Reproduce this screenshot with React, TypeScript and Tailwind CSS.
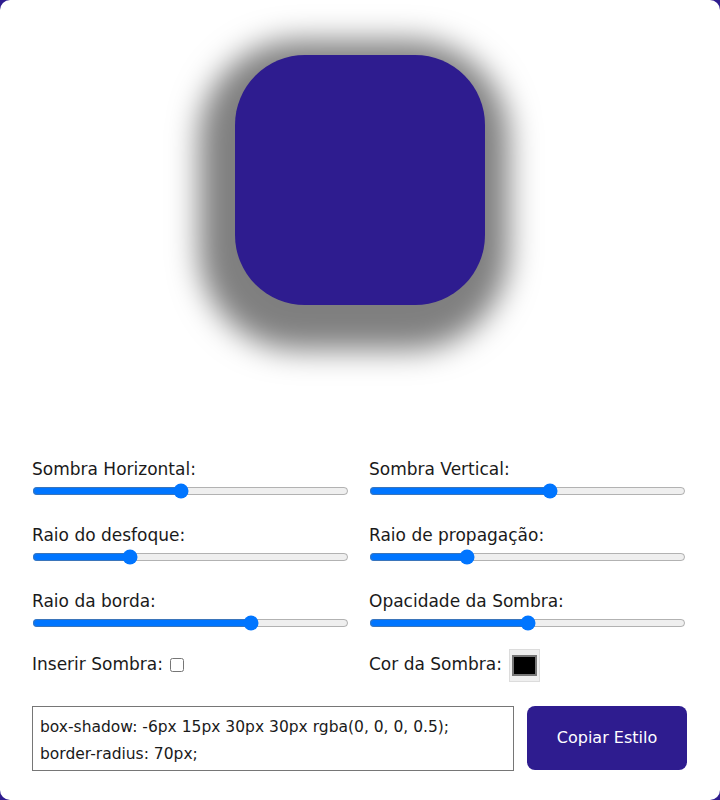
import { useState } from "react";

const font = { fontFamily: '"DejaVu Sans", "Liberation Sans", sans-serif' };

type Ctl = { label: string; min: number; max: number; step: number; value: number; key: string };

const App = () => {
  const [vals, setVals] = useState<Record<string, number>>({
    h: -6,
    v: 15,
    blur: 30,
    spread: 30,
    radius: 70,
    opacity: 0.5,
  });
  const [inset, setInset] = useState(false);
  const [color, setColor] = useState("#000000");

  const controls: Ctl[] = [
    { label: "Sombra Horizontal:", min: -100, max: 100, step: 1, value: vals.h, key: "h" },
    { label: "Sombra Vertical:", min: -100, max: 100, step: 1, value: vals.v, key: "v" },
    { label: "Raio do desfoque:", min: 0, max: 100, step: 1, value: vals.blur, key: "blur" },
    { label: "Raio de propagação:", min: 0, max: 100, step: 1, value: vals.spread, key: "spread" },
    { label: "Raio da borda:", min: 0, max: 100, step: 1, value: vals.radius, key: "radius" },
    { label: "Opacidade da Sombra:", min: 0, max: 1, step: 0.01, value: vals.opacity, key: "opacity" },
  ];

  const r = parseInt(color.slice(1, 3), 16);
  const g = parseInt(color.slice(3, 5), 16);
  const b = parseInt(color.slice(5, 7), 16);
  const rgba = `rgba(${r}, ${g}, ${b}, ${vals.opacity})`;
  const shadow = `${inset ? "inset " : ""}${vals.h}px ${vals.v}px ${vals.blur}px ${vals.spread}px ${rgba}`;

  return (
    <div className="min-h-screen bg-[#2e1c8f] flex items-center justify-center" style={font}>
      <div className="w-[720px] h-[800px] bg-white rounded-[10px] flex flex-col text-[#1a1a1a] text-[17px]">
        <div className="h-[457px] flex justify-center pt-[55px]">
          <div
            className="w-[250px] h-[250px] bg-[#2e1c8f]"
            style={{ boxShadow: shadow, borderRadius: vals.radius }}
          />
        </div>

        <div className="grid grid-cols-[317px_317px] gap-x-5 gap-y-6 pl-8">
          {controls.map((c) => (
            <div key={c.key} className="flex flex-col">
              <label className="leading-6">{c.label}</label>
              <input
                type="range"
                min={c.min}
                max={c.max}
                step={c.step}
                value={c.value}
                onChange={(e) => setVals({ ...vals, [c.key]: Number(e.target.value) })}
                className="w-full mt-[2px]"
              />
            </div>
          ))}
          <div className="flex items-center h-6 mt-[-3px]">
            <label className="leading-6">Inserir Sombra:</label>
            <input
              type="checkbox"
              checked={inset}
              onChange={(e) => setInset(e.target.checked)}
              className="ml-[7px] mt-[1px] w-[14px] h-[14px]"
            />
          </div>
          <div className="flex items-center h-6 mt-[-3px]">
            <label className="leading-6">Cor da Sombra:</label>
            <input
              type="color"
              value={color}
              onChange={(e) => setColor(e.target.value)}
              className="ml-[7px] mt-[3px] w-[31px] h-[33px] shrink-0 bg-[#efefef] border border-[#dcdcdc] px-[2px] py-[5px] [&::-webkit-color-swatch-wrapper]:p-0 [&::-webkit-color-swatch]:border-2 [&::-webkit-color-swatch]:border-[#777] [&::-webkit-color-swatch]:rounded-none"
            />
          </div>
        </div>

        <div className="flex gap-[13px] pl-8 mt-[30px]">
          <div className="w-[482px] h-[65px] border border-[#767676] px-[7px] pt-[7px] leading-[27px] text-[15.5px]">
            <div>box-shadow: {shadow};</div>
            <div>border-radius: {vals.radius}px;</div>
          </div>
          <button className="w-[160px] h-[64px] bg-[#2e1c8f] text-white rounded-lg text-base">Copiar Estilo</button>
        </div>
      </div>
    </div>
  );
};

export default App;
